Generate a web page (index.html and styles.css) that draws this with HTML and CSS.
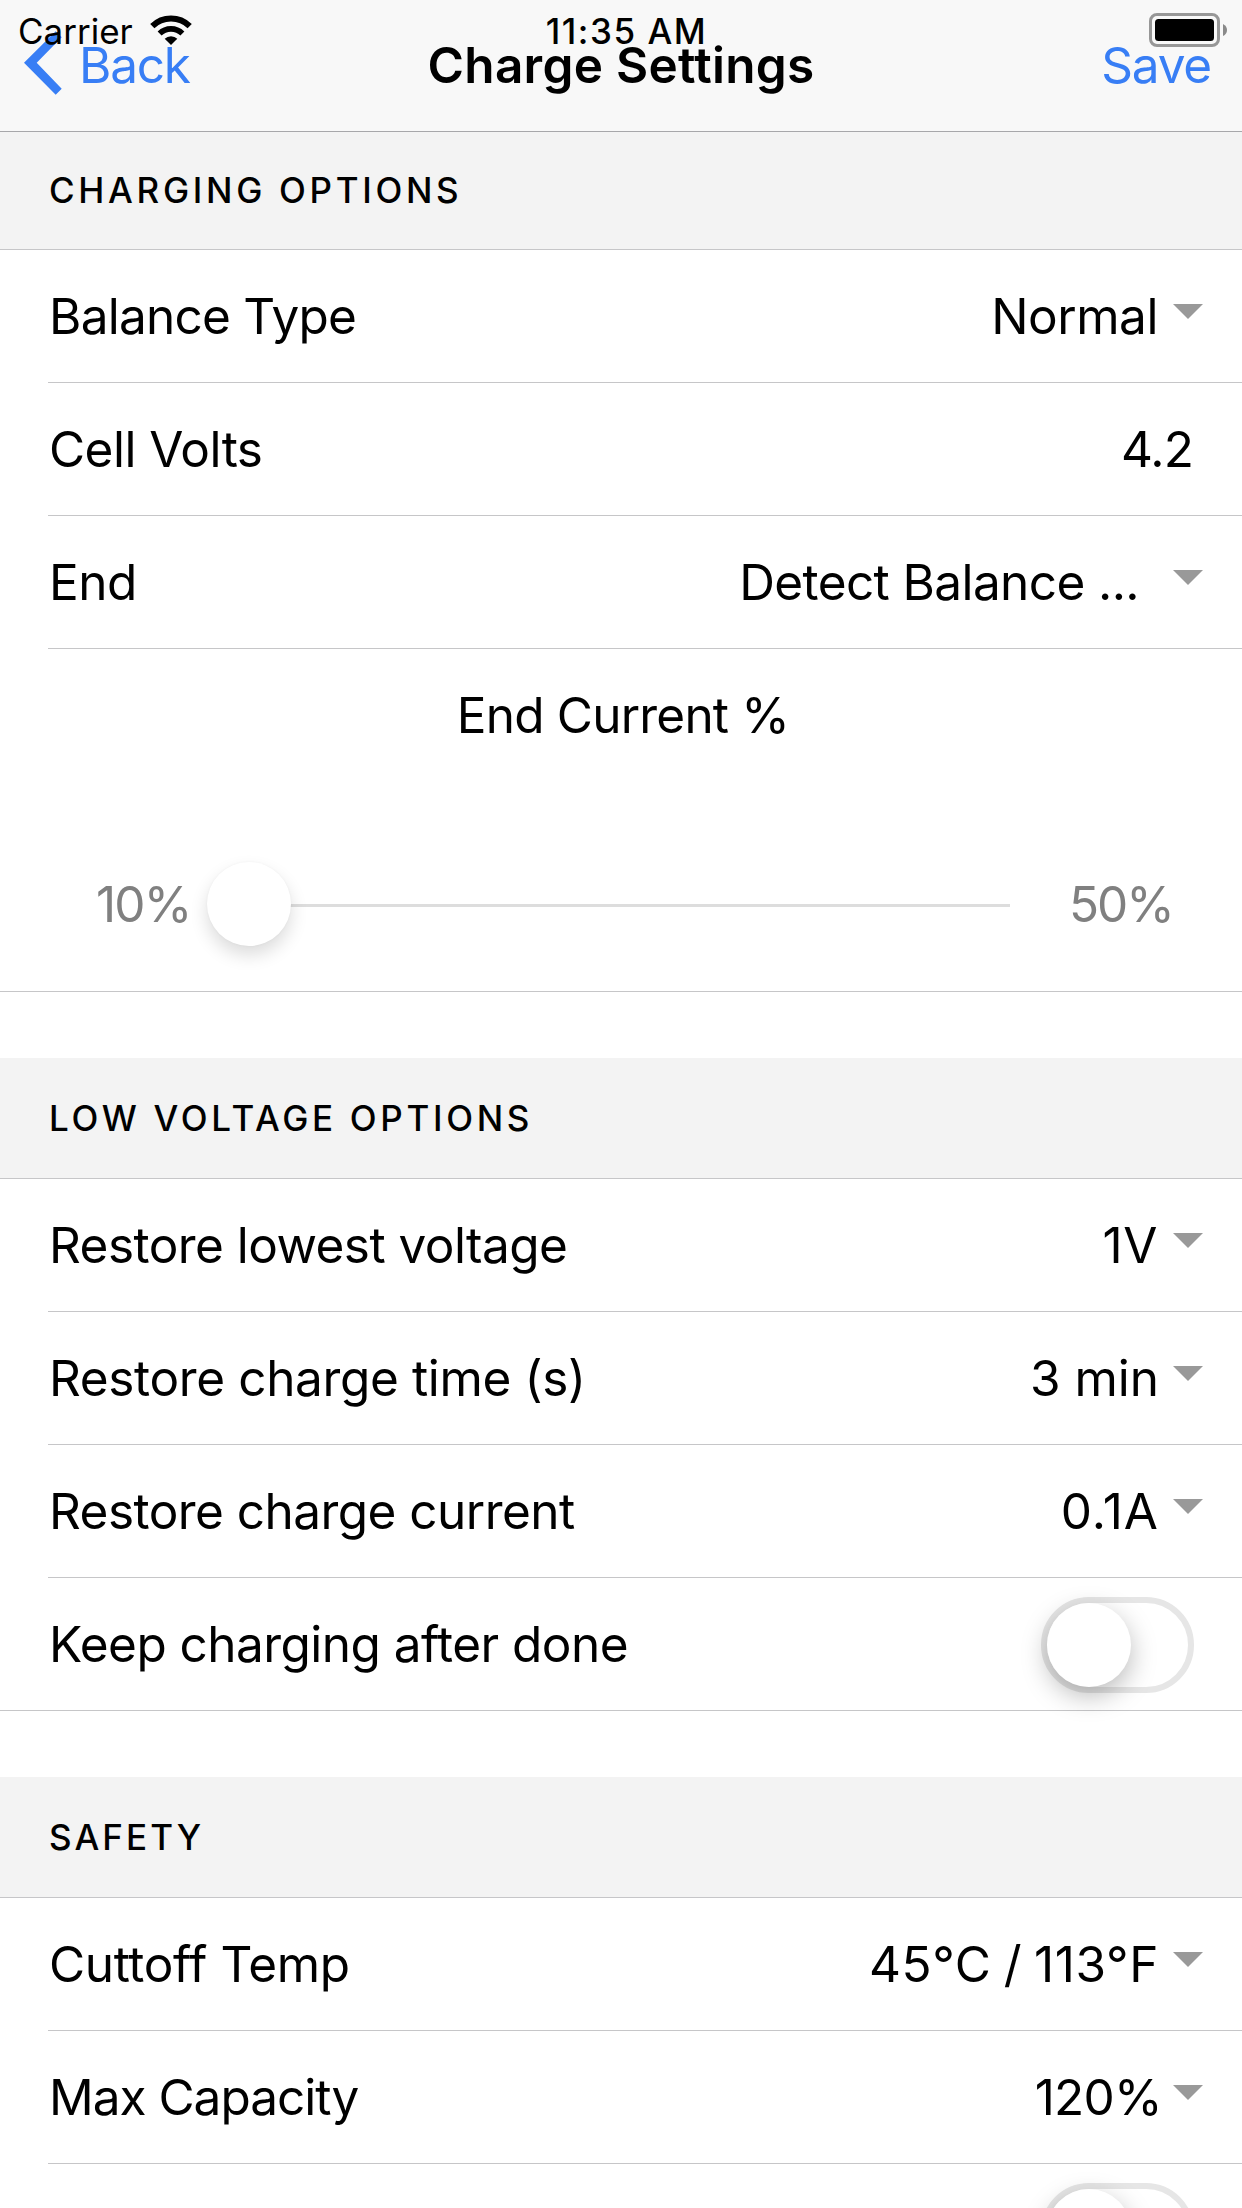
FILE: index.html
```html
<!DOCTYPE html>
<html lang="en">
<head>
<meta charset="utf-8">
<title>Charge Settings</title>
<link rel="stylesheet" href="styles.css">
</head>
<body>
<div class="status-bar">
  <div class="status-left">
    <span>Carrier</span>
    <svg class="wifi" width="42" height="30" viewBox="0 0 42 30">
      <path d="M2.3 11.2A26.8 26.8 0 0 1 39.7 11.2" fill="none" stroke="#000" stroke-width="6"/>
      <path d="M9.6 18.6A16.2 16.2 0 0 1 32.4 18.6" fill="none" stroke="#000" stroke-width="5.6"/>
      <path d="M14.7 23.7A9 9 0 0 1 27.3 23.7L21 30Z"/>
    </svg>
  </div>
  <span class="status-time">11:35 AM</span>
  <svg class="battery" width="78" height="34" viewBox="0 0 78 34">
    <rect x="1.5" y="1.5" width="68" height="31" rx="6.5" fill="none" stroke="#979797" stroke-width="3"/>
    <rect x="6" y="6" width="59" height="22" rx="3.5"/>
    <path d="M74 11Q78 13 78 17T74 23Z" fill="#8a8a8a"/>
  </svg>
</div>

<header class="nav">
  <a class="nav-back">
    <svg class="chevron" width="38" height="64" viewBox="0 0 38 64"><path d="M31.7 0.3L37.7 6.3L12.7 31.8L37.7 57.8L31.7 63.8L0 31.8Z" fill="#387ef5"/></svg>
    <span>Back</span>
  </a>
  <h1 class="nav-title">Charge Settings</h1>
  <a class="nav-save">Save</a>
</header>

<main>
  <section class="group">
    <h2 class="group-title group-title-first">CHARGING OPTIONS</h2>
    <div class="row"><span class="label tight">Balance Type</span><span class="value">Normal</span><i class="arrow"></i></div>
    <div class="row"><span class="label">Cell Volts</span><span class="value value-plain">4.2</span></div>
    <div class="row"><span class="label">End</span><span class="value value-clipped">Detect Balance ...</span><i class="arrow"></i></div>
    <div class="range-title">End Current %</div>
    <div class="range">
      <span class="range-min">10%</span>
      <div class="track"><i class="knob"></i></div>
      <span class="range-max">50%</span>
    </div>
  </section>

  <section class="group">
    <h2 class="group-title">LOW VOLTAGE OPTIONS</h2>
    <div class="row"><span class="label">Restore lowest voltage</span><span class="value loose">1V</span><i class="arrow"></i></div>
    <div class="row"><span class="label wide">Restore charge time (s)</span><span class="value normal">3 min</span><i class="arrow"></i></div>
    <div class="row"><span class="label">Restore charge current</span><span class="value looser">0.1A</span><i class="arrow"></i></div>
    <div class="row"><span class="label">Keep charging after done</span><span class="toggle"><i class="toggle-knob"></i></span></div>
  </section>

  <section class="group">
    <h2 class="group-title title-short">SAFETY</h2>
    <div class="row"><span class="label wide">Cuttoff Temp</span><span class="value temperature">45°C / 113°F</span><i class="arrow"></i></div>
    <div class="row"><span class="label tighter">Max Capacity</span><span class="value percent">120%</span><i class="arrow"></i></div>
    <div class="row"><span class="label"></span><span class="toggle"><i class="toggle-knob"></i></span></div>
  </section>
</main>
</body>
</html>
```
FILE: styles.css
```css
* { box-sizing: border-box; }

body {
  margin: 0;
  width: 1242px;
  height: 2208px;
  overflow: hidden;
  background: #fff;
  color: #000;
  font-family: Inter, "Liberation Sans", sans-serif;
  font-size: 49.5px;
  line-height: 60px;
  white-space: nowrap;
}

main { height: 2076px; overflow: hidden; }

/* Status bar, drawn over the navigation bar */
.status-bar {
  position: absolute;
  z-index: 2;
  top: 0;
  left: 0;
  width: 1242px;
  height: 62px;
  padding: 0 15px 0 18px;
  display: grid;
  grid-template-columns: 1fr auto 1fr;
  align-items: center;
  font-size: 35px;
  line-height: 42px;
}
.status-left { display: flex; align-items: center; gap: 17px; }
.wifi { flex: none; margin-bottom: 2px; }
.status-time { font-weight: 500; letter-spacing: 1.55px; margin-left: 8px; }
.battery { justify-self: end; margin-bottom: 2px; }

/* Navigation bar */
.nav {
  height: 132px;
  padding: 0 31px 2px 24px;
  display: grid;
  grid-template-columns: 1fr auto 1fr;
  align-items: center;
  background: #f8f8f8;
  border-bottom: 1px solid #a7a7aa;
}
.nav-back, .nav-save { color: #387ef5; letter-spacing: -1.2px; }
.nav-back { display: flex; align-items: center; gap: 17px; }
.chevron { flex: none; margin-bottom: 4px; }
.nav-title { margin: 0; font-size: 49.5px; font-weight: 600; letter-spacing: 0.27px; margin-left: 7px; }
.nav-save { justify-self: end; }

/* Groups */
.group { border-bottom: 1px solid #c6c6c8; margin-bottom: 66px; }
.group-title {
  margin: 0;
  height: 121px;
  padding: 0 0 0 49px;
  display: flex;
  align-items: center;
  background: #f3f3f3;
  border-bottom: 1px solid #c6c6c8;
  font-size: 35px;
  font-weight: 500;
  line-height: 42px;
  letter-spacing: 3.68px;
}
.group-title-first { height: 118px; padding-bottom: 2px; }
.title-short { letter-spacing: 3.05px; }

.row {
  margin-left: 48px;
  height: 133px;
  display: flex;
  align-items: center;
  border-bottom: 1px solid #c6c6c8;
}
.row:last-child { border-bottom: 0; height: 132px; }

.label { flex: 1; padding-left: 1px; letter-spacing: -0.54px; }
.tight { letter-spacing: -0.75px; }
.tighter { letter-spacing: -1px; }
.wide { letter-spacing: -0.36px; }

.value { letter-spacing: -0.45px; margin-right: 15px; }
.value-plain { letter-spacing: -0.9px; margin-right: 49px; }
.value-clipped { letter-spacing: -0.6px; margin-right: 34px; }
.loose { letter-spacing: 0.6px; }
.normal { letter-spacing: 0; margin-right: 14px; }
.looser { letter-spacing: 1px; margin-right: 14px; }
.temperature { letter-spacing: 0.6px; word-spacing: -2.5px; margin-right: 14px; }
.percent { letter-spacing: -0.7px; margin-right: 11px; }

.arrow {
  margin: 0 39px 9px 0;
  border: 15px solid transparent;
  border-top-color: #999;
  border-bottom: 0;
}

/* Range slider */
.range-title { height: 133px; line-height: 132px; text-align: center; letter-spacing: -0.8px; margin-left: 4px; }
.range {
  height: 209px;
  padding-top: 35px;
  display: grid;
  grid-template-columns: 207px 803px 1fr;
  align-items: center;
  color: #808080;
}
.range-min { padding-left: 96px; letter-spacing: -1.8px; }
.range-max { padding-left: 59px; letter-spacing: -2px; }
.track {
  height: 84px;
  display: flex;
  background: linear-gradient(#ddd, #ddd) 42px 42px / 761px 3px no-repeat;
}
.knob {
  width: 84px;
  height: 84px;
  border-radius: 50%;
  background: #fff;
  box-shadow: 0 0 2px 1px rgba(0, 0, 0, 0.02), 0 9px 18px rgba(0, 0, 0, 0.14);
}

/* Toggle */
.toggle {
  width: 153px;
  height: 96px;
  margin: 2px 48px 0 0;
  border: 6px solid #e6e6e6;
  border-radius: 48px;
  display: flex;
}
.toggle-knob {
  width: 84px;
  height: 84px;
  border-radius: 50%;
  background: #fff;
  box-shadow: 0 9px 27px rgba(0, 0, 0, 0.27);
}
```
